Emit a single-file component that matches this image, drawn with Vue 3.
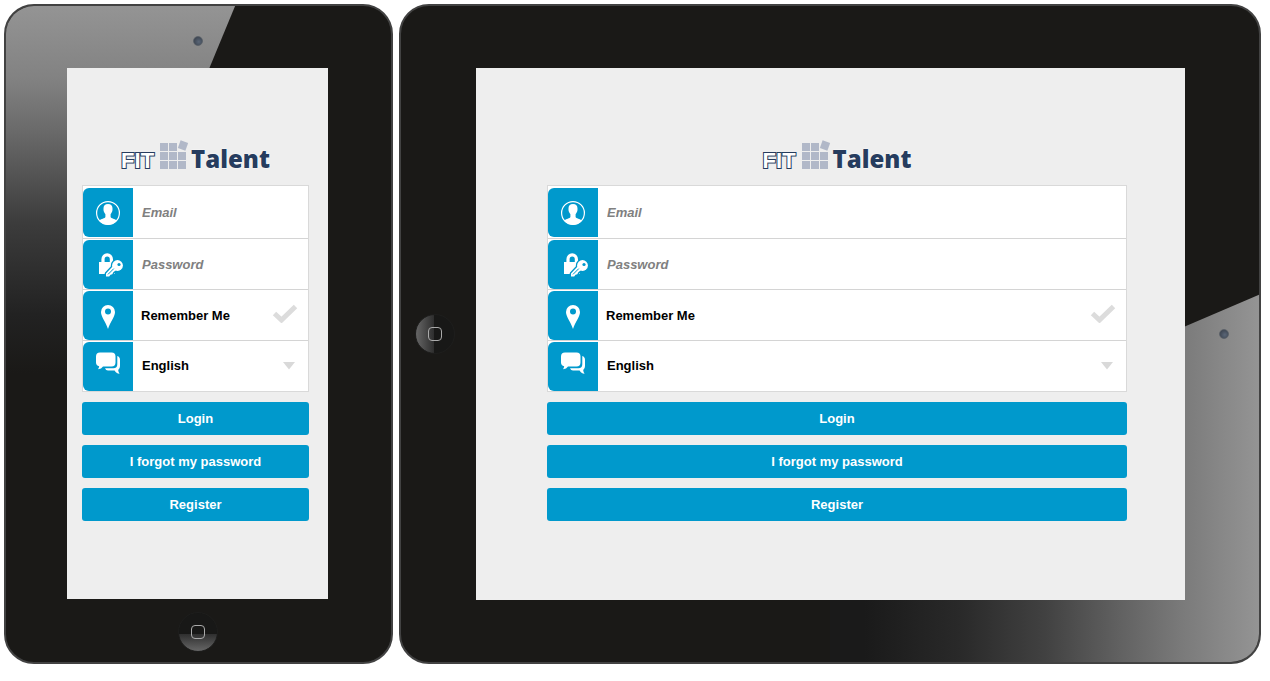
<script setup>
import { reactive } from 'vue'

const devices = reactive([
  { id: 'portrait', email: '', password: '', remember: false, language: 'English' },
  { id: 'landscape', email: '', password: '', remember: false, language: 'English' },
])
const actions = ['Login', 'I forgot my password', 'Register']
</script>

<template>
  <main class="page">
    <section v-for="d in devices" :key="d.id" class="device" :class="d.id">
      <div class="gloss"></div>
      <div class="bezel camera-side"><span class="camera"></span></div>
      <div class="screen">
        <h1 class="logo">
          <span class="fit">FIT</span>
          <svg class="mark" viewBox="0 0 29 30" aria-hidden="true">
            <g fill="#b1b8c8">
              <rect x="0" y="3" width="8" height="8" /><rect x="9" y="3" width="8" height="8" />
              <rect x="0" y="12" width="8" height="8" /><rect x="9" y="12" width="8" height="8" /><rect x="18" y="12" width="8" height="8" />
              <rect x="0" y="21" width="8" height="8" /><rect x="9" y="21" width="8" height="8" /><rect x="18" y="21" width="8" height="8" />
              <rect x="19" y="1.5" width="8" height="8" transform="rotate(20 23 5.5)" />
            </g>
          </svg>
          <span class="talent">Talent</span>
        </h1>

        <form @submit.prevent>
          <div class="fields">
            <div class="row">
              <label class="tile" :for="d.id + '-email'" aria-label="Email">
                <svg viewBox="0 0 50 49" fill="#fff">
                  <circle cx="25" cy="25" r="11.4" fill="none" stroke="#fff" stroke-width="1.2" />
                  <path d="M25 16c3 0 4.700 1.800 4.500 4.600 .3 2.400-.8 4.400-1.900 5.600v2.800c.4 1.400 4.400 1.900 6.300 3.700A11.500 11.500 0 0 1 16.100 32.700c1.900-1.800 5.900-2.300 6.300-3.700v-2.800c-1.100-1.200-2.200-3.200-1.900-5.600C20.300 17.800 22 16 25 16z" />
                </svg>
              </label>
              <input :id="d.id + '-email'" v-model="d.email" class="field" type="email" placeholder="Email" />
            </div>
            <div class="row">
              <label class="tile" :for="d.id + '-password'" aria-label="Password">
                <svg viewBox="0 0 50 49">
                  <path d="M20 23v-3.800a4.200 4.400 0 0 1 8.400 0V23" fill="none" stroke="#fff" stroke-width="3.200" />
                  <path d="M16 22h16v12H16z" fill="#fff" />
                  <g stroke="#09c" stroke-width="2.600" stroke-linejoin="round" fill="#09c">
                    <circle cx="34.500" cy="25.500" r="5.400" />
                    <path d="M30.500 25.500L23 33.500v3h3.200l8.300-7.500z" />
                  </g>
                  <g fill="#fff">
                    <circle cx="34.500" cy="25.500" r="5.400" />
                    <path d="M30.500 25.500L23 33.500v3h3.200l1.300-1.800 1.800-.5 1-2 4.200-3.200z" />
                  </g>
                  <path d="M30.800 28.600l-5.800 5.800" stroke="#09c" stroke-width="1" />
                  <circle cx="36" cy="24.500" r="1.600" fill="#09c" />
                </svg>
              </label>
              <input :id="d.id + '-password'" v-model="d.password" class="field" type="password" placeholder="Password" />
            </div>
            <div class="row">
              <span class="tile">
                <svg viewBox="0 0 50 49">
                  <path d="M25 14a7 7 0 0 1 7 7c0 4.500-4.500 9.500-7 17-2.500-7.500-7-12.500-7-17a7 7 0 0 1 7-7z" fill="#fff" />
                  <circle cx="25" cy="20.500" r="3" fill="#09c" />
                </svg>
              </span>
              <label class="caption" :for="d.id + '-remember'">Remember Me</label>
              <span class="tick">
                <input :id="d.id + '-remember'" v-model="d.remember" type="checkbox" />
                <svg viewBox="0 0 26 20" aria-hidden="true"><path d="M2.500 10.500l7 6.500L23.500 3.500" /></svg>
              </span>
            </div>
            <div class="row">
              <label class="tile" :for="d.id + '-language'" aria-label="Language">
                <svg viewBox="0 0 50 49" fill="#fff">
                  <path d="M17 10.500h11.500q4 0 4 4v6q0 4-4 4H20q-1.500 2.500-5 2.700 1-1.300 1.200-3Q13 23.500 13 20.500v-6q0-4 4-4z" />
                  <path d="M34.300 14q2.700.8 2.700 4v6q0 3-1.800 3.900.2 2.400 1.400 3.900-3.600-.2-5-3.300H25q-2.200 0-3-2.200h8.300q4 0 4-4z" />
                </svg>
              </label>
              <span class="choice">
                <select :id="d.id + '-language'" v-model="d.language" class="field">
                  <option>English</option>
                </select>
                <svg viewBox="0 0 12 8" aria-hidden="true"><path d="M0 0h12L6 7.500z" fill="#d9d9d9" /></svg>
              </span>
            </div>
          </div>
          <button v-for="a in actions" :key="a" type="button" class="action">{{ a }}</button>
        </form>
      </div>
      <div class="bezel home-side">
        <button class="home" type="button" aria-label="Home"><span></span></button>
      </div>
    </section>
  </main>
</template>

<style>
body {
  margin: 0;
  background: #fff;
}
</style>

<style scoped>
* {
  box-sizing: border-box;
}

.page {
  display: grid;
  grid-template-columns: minmax(0, 389fr) minmax(0, 862fr);
  gap: 6px;
  padding: 4px 9px 16px 4px;
  font-family: "Liberation Sans", Arial, sans-serif;
  font-size: 13px;
  font-weight: bold;
}

.device {
  position: relative;
  display: grid;
  overflow: hidden;
  border: 2px solid #424242;
  border-radius: 30px;
  background: #1a1917;
}

.portrait {
  grid-template: 62px 1fr 63px / 61px minmax(0, 1fr) 63px;
}

.landscape {
  grid-template: 62px 1fr 62px / 75px minmax(0, 1fr) 74px;
}

.gloss {
  position: absolute;
  inset: 0;
}

.portrait .gloss {
  background: linear-gradient(#949494, #828282 11%, #6a6a6a 19%, #3c3c3c 33%, #222 47%, #1a1917 56%);
  clip-path: polygon(0 0, 59.500% 0, 20% 56%, 0 56%);
}

.landscape .gloss {
  background: linear-gradient(to left, #949494, #7a7a7a 9%, #626262 16%, #414141 25%, #292929 35%, #1a1a1a 46%);
  clip-path: polygon(100% 44%, 100% 100%, 50% 100%, 50% 72%);
}

.bezel,
.screen {
  position: relative;
}

.bezel {
  display: flex;
  align-items: center;
  justify-content: center;
}

.portrait .camera-side { grid-area: 1 / 2; padding-top: 8px; }
.portrait .screen { grid-area: 2 / 2; padding: 72px 19px 78px 15px; }
.portrait .home-side { grid-area: 3 / 2; padding-top: 2px; }
.landscape .camera-side { grid-area: 2 / 3; padding-left: 4px; }
.landscape .screen { grid-area: 2 / 2; padding: 72px 58px 79px 71px; }
.landscape .home-side { grid-area: 2 / 1; padding-right: 8px; }

.camera {
  width: 10px;
  height: 10px;
  border: 1px solid #5a6068;
  border-radius: 50%;
  background: radial-gradient(circle at 60% 60%, #5a6677, #343b45);
}

.home {
  display: grid;
  place-items: center;
  width: 40px;
  height: 40px;
  padding: 0;
  border: 1px solid #1e1e1d;
  border-radius: 50%;
  background: linear-gradient(#181817 54%, #2d2d2d 54%, #666);
}

.landscape .home {
  background: linear-gradient(to left, #181817 52%, #2d2d2d 52%, #666);
}

.home span {
  width: 14px;
  height: 14px;
  border: 1px solid #aaa;
  border-radius: 4px;
}

.screen {
  background: #eee;
}

.logo {
  display: flex;
  align-items: flex-end;
  justify-content: center;
  height: 30px;
  margin: 0 0 15px;
  color: #263c5e;
  line-height: 22px;
}

.fit {
  color: #fff;
  font-size: 22px;
  line-height: 18px;
  -webkit-text-stroke: 2px #263c5e;
  paint-order: stroke fill;
}

.mark {
  width: 29px;
  height: 30px;
  margin: 0 2px 0 6px;
}

.talent {
  font-family: "Open Sans", "Noto Sans", sans-serif;
  font-size: 24px;
  font-weight: 800;
  text-shadow: 0 0 2px #fff, 0 0 1px #fff;
}

.fields {
  padding-top: 1px;
  border: 1px solid #d9d9d9;
  background: #fff;
}

.row {
  display: flex;
  align-items: center;
  padding-top: 1px;
  border-bottom: 1px solid #d4d4d4;
}

.row:first-child {
  padding-bottom: 1px;
}

.row:last-child {
  border-bottom: 0;
}

.tile {
  flex: none;
  width: 50px;
  height: 49px;
  border-radius: 6px 0 0 6px;
  background: #09c;
}

.tile svg {
  display: block;
}

.field {
  flex: 1;
  width: 100%;
  min-width: 0;
  height: 40px;
  padding: 0 9px;
  border: 0;
  outline: 0;
  background: none;
  color: #000;
  font: inherit;
  appearance: none;
}

.field::placeholder {
  color: #808080;
  font-style: italic;
  opacity: 1;
}

.caption {
  flex: 1;
  padding-left: 8px;
}

.tick {
  display: grid;
  width: 26px;
  height: 20px;
  margin: 0 10px 6px 0;
}

.tick input,
.tick svg {
  grid-area: 1 / 1;
  width: 26px;
  height: 20px;
  margin: 0;
}

.tick input {
  appearance: none;
}

.tick svg {
  fill: none;
  stroke: #dcdcdc;
  stroke-width: 5;
  pointer-events: none;
}

.choice {
  display: grid;
  flex: 1;
  align-items: center;
  padding-bottom: 2px;
}

.choice > * {
  grid-area: 1 / 1;
}

.choice svg {
  justify-self: end;
  width: 12px;
  height: 8px;
  margin-right: 13px;
  pointer-events: none;
}

.action {
  display: block;
  width: 100%;
  height: 33px;
  margin-top: 10px;
  padding: 0;
  border: 0;
  border-radius: 3px;
  background: #09c;
  color: #fff;
  font: inherit;
}
</style>
